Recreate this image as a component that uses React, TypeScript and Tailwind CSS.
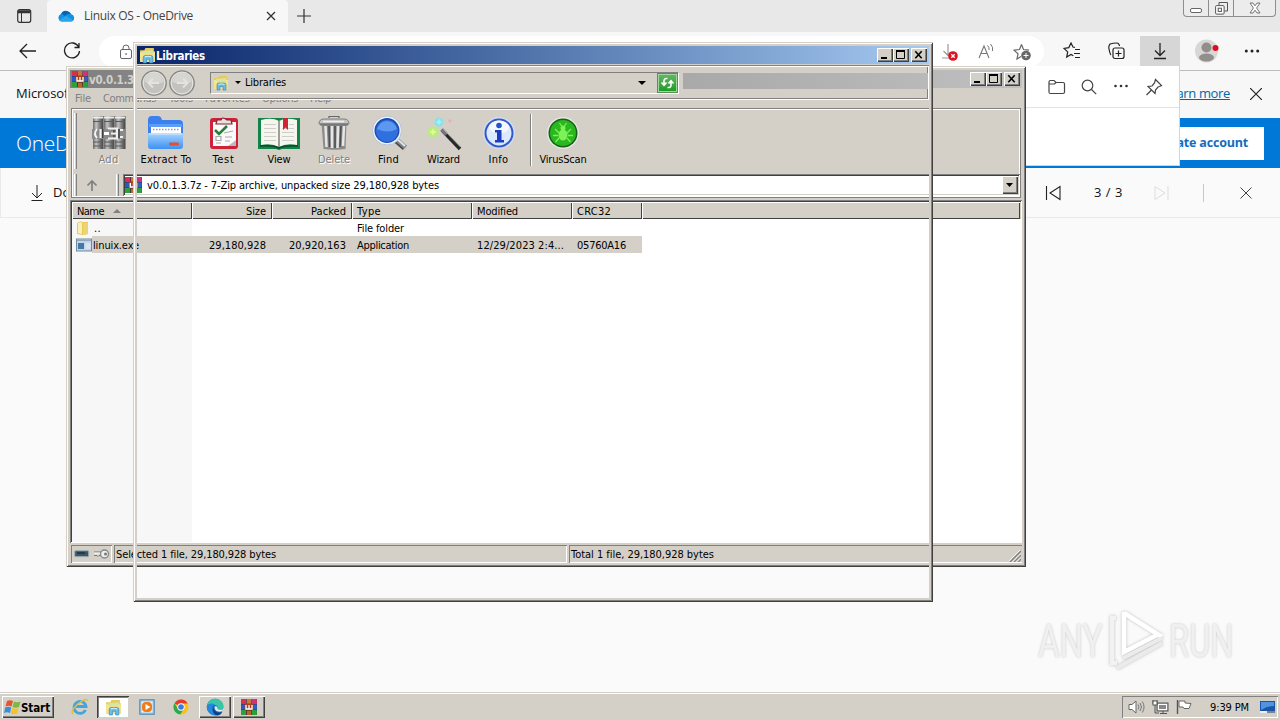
import { useLayoutEffect, useRef, useState } from 'react';
import type { ReactNode } from 'react';

const UI = "font-['DejaVu_Sans_Condensed','DejaVu_Sans',sans-serif] text-[11px] leading-[14px] [&_span]:pt-[2px]";
const OPEN = "font-['Open_Sans','Noto_Sans',sans-serif]";

/* Text whose tracking is adjusted so that it takes exactly `w` pixels. */
function T({ children, w, className = '' }: { children: string; w: number; className?: string }) {
  const ref = useRef<HTMLSpanElement>(null);
  const [ls, setLs] = useState(0);
  useLayoutEffect(() => {
    const el = ref.current;
    if (!el) return;
    el.style.letterSpacing = '0px';
    const natural = el.getBoundingClientRect().width;
    const next = (w - natural) / children.length;
    el.style.letterSpacing = `${next}px`;
    setLs(next);
  }, [w, children]);
  return (
    <span ref={ref} className={`inline-block shrink-0 whitespace-pre ${className}`} style={{ letterSpacing: ls }}>
      {children}
    </span>
  );
}

function Svg({ w, h, box, className = '', children }: { w: number; h: number; box?: string; className?: string; children: ReactNode }) {
  return (
    <svg width={w} height={h} viewBox={box ?? `0 0 ${w} ${h}`} className={`block shrink-0 ${className}`} fill="none">
      {children}
    </svg>
  );
}

const Books = ({ s = 16, w = s }: { s?: number; w?: number }) => (
  <svg width={w} height={s} viewBox="0 0 16 16" preserveAspectRatio="none" className="block shrink-0">
    <rect x="0" y="0" width="16" height="16" fill="#2a1c3c" />
    <rect x="0" y="0" width="5" height="5" fill="#d8304c" />
    <rect x="5.600" y="0" width="4.800" height="5" fill="#3b64cf" />
    <rect x="10.900" y="0" width="5" height="5" fill="#d4307c" />
    <rect x="0" y="5.300" width="5" height="5.200" fill="#2b57c8" />
    <rect x="10.900" y="5.300" width="5" height="5.200" fill="#2b62c8" />
    <rect x="0" y="10.800" width="5" height="5.200" fill="#2da03c" />
    <rect x="10.900" y="10.800" width="5" height="5.200" fill="#2da03c" />
    <rect x="5.600" y="0" width="4.800" height="4.500" fill="#c87832" />
    <rect x="5.600" y="11.500" width="4.800" height="4.500" fill="#b8642a" />
    <rect x="3.600" y="4.800" width="8.800" height="6.400" fill="#a8401c" />
    <path d="M5 6v4h6V6M8 6v4" stroke="#fff" strokeWidth="1.300" fill="none" />
  </svg>
);

const LibFolder = ({ s = 16 }: { s?: number }) => (
  <Svg w={s} h={s} box="0 0 16 16">
    <path d="M1 3h4l1-2h8v3h1v10H1z" fill="#e8c95c" />
    <path d="M1 5h14v9H1z" fill="#f5e694" />
    <path d="M3 4l10-1v3H3z" fill="#cfe8a8" />
    <path d="M2 13l2-7h9l2 7" fill="#f1dd80" />
    <path d="M4 15V10q0-2 2-2h5q2 0 2 2v5h-3v-3.500H7V15z" fill="#6bbde6" stroke="#2f86b8" strokeWidth=".6" />
    <path d="M5.500 9.500q3-1.500 6 0" stroke="#d3f2fc" />
  </Svg>
);

const EdgeLogo = () => (
  <Svg w={18} h={18}>
    <circle cx="9" cy="9" r="8.3" fill="#1a6fc4" />
    <path d="M1 8C2 2 7 0 11 1c4 1 7 4 6.500 8-.5 3-4 3-6 2.200 1-2-.5-4.200-3-4.200C5 7 2 6 1 8z" fill="#38c6a4" />
    <path d="M1 8c2-3 6-3 8-1.500C5 8 5 12 8 15c1.500 1.500 3 2 4 2C6 19 .3 14.500 1 8z" fill="#2387dc" />
    <path d="M8.500 8.500c-1.500 1.500-.8 5 3.500 6 2 .4 3.500-.4 4.500-1-1 2.500-3 4-5.500 4-4-1-5.500-6-2.500-9z" fill="#123f8a" />
    <path d="M9 8.200c1.800-.4 3 .9 2.500 2.800 1 1 3.500 1 6 .3-.5 1.800-3.500 3.400-7 1.700-1.700-1-2.400-3.200-1.500-4.800z" fill="#e4ece8" />
  </Svg>
);

const Chrome = () => (
  <Svg w={16} h={16}>
    <circle cx="8" cy="8" r="7.500" fill="#fbc116" />
    <path d="M8 8L1.500 4.200A7.500 7.500 0 0 1 14.700 4.500H8z" fill="#e33b2e" />
    <path d="M1.500 4.200A7.500 7.500 0 0 0 7.300 15.500l3.500-5.700L8 8 4.700 9.500z" fill="#2da94f" />
    <circle cx="8" cy="8" r="3.700" fill="#fff" />
    <circle cx="8" cy="8" r="2.800" fill="#3a7be8" />
  </Svg>
);

const BTN = 'shadow-[inset_1px_1px_#fff,inset_-1px_-1px_#404040,inset_-2px_-2px_#808080] bg-[#d4d0c8]';

function Caption() {
  return (
    <div className="flex h-[14px]">
      <div className={`h-[14px] w-4 ${BTN}`}>
        <Svg w={16} h={14}><path d="M4 10h6" stroke="#000" strokeWidth="2" /></Svg>
      </div>
      <div className={`h-[14px] w-4 ${BTN}`}>
        <Svg w={16} h={14}><path d="M3.500 3.500h8v7h-8z" stroke="#000" /><path d="M3 3h9" stroke="#000" strokeWidth="2" /></Svg>
      </div>
      <div className={`ml-[2px] h-[14px] w-4 ${BTN}`}>
        <Svg w={16} h={14}><path d="M4.300 3.300l6.400 6.900M10.700 3.300l-6.400 6.900" stroke="#000" strokeWidth="1.600" /></Svg>
      </div>
    </div>
  );
}

function Tool({ label, w, tw, off = false, children }: { label: string; w: string; tw: number; off?: boolean; children: ReactNode }) {
  return (
    <div className={`flex ${w} shrink-0 flex-col items-center`}>
      <div className="flex h-[37px] items-center justify-center">{children}</div>
      <div className={`${UI} ${off ? 'text-[#808080] [text-shadow:1px_1px_#fff]' : 'text-black'}`}>
        <T w={tw}>{label}</T>
      </div>
    </div>
  );
}

const Grip = ({ c }: { c: string }) => <div className={`w-[3px] shrink-0 border-l border-r border-l-white border-r-[#808080] bg-[#d4d0c8] ${c}`} />;

const AddIcon = () => (
  <Svg w={36} h={36}>
    <defs>
      <linearGradient id="spine">
        <stop stopColor="#6a6a6a" /><stop offset=".3" stopColor="#c4c4c4" /><stop offset=".65" stopColor="#7c7c7c" /><stop offset="1" stopColor="#3e3e3e" />
      </linearGradient>
    </defs>
    <rect x="2" y="1" width="10.500" height="33" fill="url(#spine)" />
    <rect x="13" y="1" width="10.500" height="33" fill="url(#spine)" />
    <rect x="24" y="1" width="10.500" height="33" fill="url(#spine)" />
    <path d="M2 2.500h32" stroke="#ececec" strokeWidth="2" strokeDasharray="10 1" />
    <path d="M2 6.500h32M2 27h32M2 31h32" stroke="#5c5c5c" strokeDasharray="10 1" />
    <rect x="1" y="14" width="34" height="10" fill="#8a8a8a" />
    <path d="M6 14q-4 5 0 9M9.500 14v9" stroke="#f4f4f4" strokeWidth="2" />
    <path d="M13 18.500h5" stroke="#fff" strokeWidth="3" />
    <path d="M17 13.500h9v10h-9M20 18.500h6M29 15h3M29 22h3" stroke="#f0f0f0" strokeWidth="2" />
    <path d="M11.700 14v9M23 15v2.500M23 20v2M28 14v9" stroke="#3a3a3a" strokeWidth="1.300" />
  </Svg>
);

const ExtractIcon = () => (
  <Svg w={38} h={36}>
    <defs>
      <linearGradient id="fb" x1="0" y1="0" x2="0" y2="1"><stop stopColor="#a7d5ff" /><stop offset="1" stopColor="#3d91f2" /></linearGradient>
    </defs>
    <path d="M1 5q0-4 4-4h6q3 0 4 4h17q4 0 4 4v11H1z" fill="#3c80ee" />
    <path d="M2 9h33v3H2z" fill="#5c9df7" />
    <path d="M4 12h30v9H4z" fill="#fff" />
    <path d="M6 14.500h26" stroke="#8f9bb0" strokeWidth="1.500" strokeDasharray="1.500 1.500" />
    <path d="M1 19q0-1 1-1h33q1 0 1 1v12q0 3-3 3H4q-3 0-3-3z" fill="url(#fb)" />
    <path d="M2 19h33" stroke="#d8eeff" />
    <rect x="22" y="27.500" width="10" height="3" rx=".8" fill="#e2502f" />
  </Svg>
);

const TestIcon = () => (
  <Svg w={30} h={34}>
    <rect x="1" y="2" width="28" height="31" rx="3" fill="#cf2139" />
    <path d="M4 6h23v24H4z" fill="#fafafa" />
    <path d="M27 24v6h-8z" fill="#b9bac2" />
    <path d="M8 4h4q1-4 6 0h4l1 4H7z" fill="#e9e1e1" stroke="#7b2a30" strokeWidth="1.200" />
    <path d="M6 14l4 4 8-8" stroke="#2b7d3c" strokeWidth="2.600" />
    <path d="M15 17l9-2M16 21h7M16 25h5M7 20.500h5v4H7zM7 27h5" stroke="#aaa" strokeWidth="1.200" />
  </Svg>
);

const ViewIcon = () => (
  <Svg w={42} h={34}>
    <path d="M0 2h42v31H24l-3 1-3-1H0z" fill="#128447" />
    <path d="M3 4q11-3 18 1 7-4 18-1v25q-11-2-18 2-7-4-18-2z" fill="#f6f6f0" />
    <path d="M6 8.500h12M6 12.500h12M6 16.500h12M6 20.500h12M6 24.500h12M24 16.500h12M24 20.500h12M24 24.500h12M24 12.500h12M31 8.500h5" stroke="#cfcfc8" />
    <path d="M21 5v26" stroke="#828278" strokeWidth="1.500" />
    <path d="M25 2h5v12l-2.500-2.500L25 14z" fill="#ce2436" />
    <path d="M2 30q12-1 19 2 7-3 19-2" stroke="#0b4a28" strokeWidth="1.500" />
  </Svg>
);

const TrashIcon = () => (
  <Svg w={32} h={36}>
    <path d="M3.500 8h25l-1 26q-11 1.500-22 0z" fill="#8b8b8b" />
    <path d="M7.500 11l1 21M14 11v22M20 11l-.5 22M26 11l-1 20" stroke="#e6e6e6" strokeWidth="2.500" />
    <path d="M11 11l.5 21M17 11v22M23 11l-1 21" stroke="#4e4e4e" strokeWidth="1.500" />
    <path d="M1 9q0-5 5-5h20q5 0 5 5z" fill="#c4c4c4" stroke="#7e7e7e" />
    <path d="M2 9.500h28" stroke="#777" strokeWidth="2" />
    <path d="M11 3V1.500h10V3" stroke="#666" strokeWidth="1.200" />
    <path d="M5 6.500h21" stroke="#eee" strokeWidth="1.500" />
  </Svg>
);

const FindIcon = () => (
  <Svg w={36} h={36}>
    <path d="M25 25l9 8" stroke="#7f878d" strokeWidth="6" />
    <path d="M25 23l9 8" stroke="#dfe5e8" strokeWidth="2" />
    <path d="M24 27l8 7" stroke="#444" strokeWidth="1.500" />
    <circle cx="16" cy="15.500" r="14.500" fill="#eef4fb" stroke="#b7c3d4" />
    <circle cx="16" cy="15.500" r="12.500" fill="#1e4cb0" />
    <circle cx="16" cy="16" r="11" fill="#2f6fe0" />
    <path d="M6 14q3-8 10-8t10 8q-9 5-20 0z" fill="#5c97f0" />
  </Svg>
);

const WizardIcon = () => (
  <Svg w={36} h={36}>
    <defs>
      <radialGradient id="wg"><stop stopColor="#e4ff8c" /><stop offset=".4" stopColor="#b4f468" /><stop offset="1" stopColor="#b4f468" stopOpacity="0" /></radialGradient>
      <radialGradient id="wb"><stop stopColor="#b9f8ff" /><stop offset=".5" stopColor="#77e4ee" /><stop offset="1" stopColor="#77e4ee" stopOpacity="0" /></radialGradient>
    </defs>
    <circle cx="7" cy="17" r="7" fill="url(#wg)" />
    <circle cx="13" cy="7" r="5.500" fill="url(#wb)" />
    <path d="M13 4v6M10 7h6" stroke="#9ff4ff" />
    <path d="M7 14v6M4 17h6" stroke="#eeffae" />
    <path d="M22 6h4M24 4v4" stroke="#f3a3ad" />
    <path d="M16 15l18 19" stroke="#272727" strokeWidth="3.500" />
    <path d="M15.500 14.500l5 5" stroke="#77727b" strokeWidth="3.500" />
    <path d="M17.500 14.500l17 17.500" stroke="#aaa" />
  </Svg>
);

const InfoIcon = () => (
  <Svg w={34} h={34}>
    <circle cx="17" cy="17" r="16" fill="#cfdcf6" />
    <circle cx="17" cy="17" r="13.500" fill="#dce9ff" stroke="#315ac8" strokeWidth="2" />
    <ellipse cx="17" cy="11" rx="10" ry="6.500" fill="#f5f9ff" />
    <circle cx="17" cy="9.500" r="2.800" fill="#2454c8" />
    <path d="M13 14h6.500v10H22v2.500h-9V24h2v-7.500h-2z" fill="#1a3ec0" />
  </Svg>
);

const VirusIcon = () => (
  <Svg w={34} h={34}>
    <circle cx="17" cy="17" r="16" fill="#e1e9df" />
    <circle cx="17" cy="17" r="14.500" fill="#1b5f1b" />
    <circle cx="17" cy="17" r="13" fill="#2ab71f" />
    <ellipse cx="17" cy="19" rx="4.500" ry="5.500" fill="#7df158" />
    <circle cx="17" cy="12" r="2.500" fill="#7df158" />
    <path d="M13 17l-4-4M21 17l4-4M12 19.500H7M22 19.500h5M13 22l-3.500 4M21 22l3.500 4M15.500 10l-2-3M18.500 10l2-3" stroke="#7df158" strokeWidth="1.300" />
  </Svg>
);

function Browser() {
  return (
    <div className={`flex h-[692px] flex-col bg-[#fafafa] ${OPEN}`}>
      <div className="flex h-8 bg-[#e8e8e8]">
        <div className="flex w-[47px] items-center justify-center">
          <Svg w={16} h={16}><rect x="1.700" y="1.700" width="13" height="12.600" rx="2" stroke="#333" strokeWidth="1.200" /><path d="M2 3h12M2 4.500h12" stroke="#333" strokeWidth="1.500" /><path d="M5.500 5v9" stroke="#333" /></Svg>
        </div>
        <div className="flex w-[241px] items-center rounded-t-[4px] bg-[#f7f7f7] pl-[10px]">
          <Svg w={18} h={12}><path d="M5 4a5 5 0 0 1 9 0 4 4 0 0 1 1 7.500H4A4 4 0 0 1 4 4z" fill="#1490df" /><path d="M4 4q2-4 6-3 3 1 4 3-4-1-6 2Q6 4 4 4z" fill="#0364b8" /><path d="M2 10l7-4 7 4-2 1.500H4z" fill="#28a8ea" /></Svg>
          <T w={109} className="ml-[9px] text-[12px] leading-4 text-[#444]">Linuix OS - OneDrive</T>
          <Svg w={10} h={10} className="ml-[73px]"><path d="M1 1l8 8M9 1l-8 8" stroke="#333" strokeWidth="1.300" /></Svg>
        </div>
        <Svg w={16} h={16} className="ml-[8px] mt-2"><path d="M8 1v14M1 8h14" stroke="#333" strokeWidth="1.200" /></Svg>
        <div className="ml-auto mr-[4px] flex h-[17px] w-[93px] rounded-b-[4px] border border-t-0 border-[#8e8e8e] bg-[#ececec]">
          <div className="flex w-[25px] items-end justify-center border-r border-[#8e8e8e] pb-[3px]"><Svg w={13} h={5}><rect x=".5" y=".5" width="11" height="4" rx="1.500" stroke="#666" fill="#fff" /></Svg></div>
          <div className="flex w-[25px] items-center justify-center border-r border-[#8e8e8e]"><Svg w={13} h={13}><path d="M4 3V.5h8.500V9H9.500" stroke="#555" /><rect x=".6" y="3.600" width="8.500" height="8.500" rx="1" stroke="#555" fill="#fff" /><rect x="3.200" y="6.200" width="3.200" height="3.200" stroke="#555" /></Svg></div>
          <div className="flex flex-1 items-center justify-center"><Svg w={12} h={12}><path d="M1 1h3l2 2.800L8 1h3L7.600 6 11 11H8L6 8.200 4 11H1l3.400-5z" stroke="#666" fill="#fff" strokeWidth=".9" /></Svg></div>
        </div>
      </div>
      <div className="flex h-[39px] border-b border-[#bdbdbd] bg-[#f7f7f7]">
        <Svg w={18} h={16} className="ml-[19px] mt-[11px]"><path d="M8 1L1 8l7 7M1 8h16" stroke="#222" strokeWidth="1.300" /></Svg>
        <Svg w={18} h={18} className="ml-[26px] mt-[10px]"><path d="M15.700 5A7.500 7.500 0 1 0 16.500 9M16 1v4.500h-4.500" stroke="#222" strokeWidth="1.300" /></Svg>
        <div className="ml-[18px] mt-[4px] flex h-[31px] w-[945px] items-center rounded-full bg-white pl-[20px]">
          <Svg w={14} h={16}><rect x="1.500" y="5.500" width="11" height="9" rx="1.500" stroke="#666" /><path d="M4 5.500V4q0-3 3-3t3 3v1.500" stroke="#666" /><rect x="6.300" y="9.300" width="1.500" height="1.500" fill="#666" /></Svg>
          <div className="ml-auto flex items-center pr-[12px]">
            <Svg w={18} h={18}><path d="M7 1v11M2.500 8L7 12.500 10 9M1 15h7" stroke="#999" strokeWidth="1.200" /><circle cx="12" cy="13" r="4.800" fill="#dc1420" /><path d="M10.300 11.300l3.400 3.400M13.700 11.300l-3.400 3.400" stroke="#fff" strokeWidth="1.300" /></Svg>
            <Svg w={17} h={17} className="ml-[19px]"><path d="M1 15L6 3l5 12M3 10.500h6" stroke="#777" strokeWidth="1.100" /><path d="M9.500 2.500q2 1.700 1.500 4.500M12.500 1q3 3 2 7" stroke="#777" /></Svg>
            <Svg w={19} h={18} className="ml-[18px]"><path d="M8.500 1.500l2 5 5.500.7M8.500 1.500l-2 5-5.500.7 4 3.500-1 5.300 4-2.500" stroke="#666" strokeWidth="1.200" /><circle cx="13" cy="12.500" r="4.800" fill="#666" /><path d="M10.500 12.500h5M13 10v5" stroke="#fff" /></Svg>
          </div>
        </div>
        <Svg w={18} h={18} className="ml-[19px] mt-[10px]"><path d="M17 7.500h-5M17 11.500h-6M17 15.500h-5M12 5.500l-2-.5-2-4-2.200 4.600L1 6.400l3.700 3.500-1 5.200L8 12.500l2.300 1.300" stroke="#222" strokeWidth="1.200" /></Svg>
        <Svg w={18} h={18} className="ml-[26px] mt-[10px]"><rect x="6" y="6" width="11" height="10.500" rx="2" stroke="#222" strokeWidth="1.200" /><path d="M11.500 8.500v6M8.500 11.500h6M4 13Q3 12 2 7q-.5-2 0-3l1-2q3-1 7-1 2 0 2.500 3" stroke="#222" strokeWidth="1.200" /></Svg>
        <div className="ml-[15px] mt-[4px] flex h-[34px] w-10 items-start justify-center bg-[#d6d6d6] pt-[6px]"><Svg w={16} h={18}><path d="M8 1v12M3 8.500l5 5 5-5M2 16.500h12" stroke="#222" strokeWidth="1.300" /></Svg></div>
        <Svg w={24} h={24} className="ml-[15px] mt-[7px]"><circle cx="11.500" cy="12" r="11.500" fill="#d9d7d5" /><circle cx="11.500" cy="8.500" r="5" fill="#918e8b" /><ellipse cx="11.500" cy="18.500" rx="7.500" ry="4" fill="#918e8b" /><circle cx="20.500" cy="9" r="3" fill="#e00b1c" /></Svg>
        <Svg w={16} h={4} className="ml-[25px] mt-[17px]"><circle cx="2.300" cy="2" r="1.500" fill="#222" /><circle cx="8" cy="2" r="1.500" fill="#222" /><circle cx="13.700" cy="2" r="1.500" fill="#222" /></Svg>
      </div>
      <div className="flex h-[47px] items-center bg-[#f7f7f7] pb-[2px] pl-4 pr-[18px]">
        <T w={57} className="text-[13px] text-[#111]">Microsoft</T>
        <T w={67} className="ml-auto text-[13px] text-[#0067a8] underline">Learn more</T>
        <Svg w={12} h={12} className="ml-[20px]"><path d="M0 0l12 12M12 0L0 12" stroke="#222" strokeWidth="1.200" /></Svg>
      </div>
      <div className="flex h-[50px] items-center bg-[#0078d7] pl-4 pr-4">
        <T w={86} className="mt-[2px] text-[21px] font-light text-white">OneDrive</T>
        <div className="ml-auto flex h-[33px] items-center bg-white px-4 pt-px"><T w={92} className="text-[12.5px] font-bold text-[#106ebe]">Create account</T></div>
      </div>
      <div className="flex h-[50px] items-center border-b border-l border-[#eaeaea] bg-[#fafafa] pl-[29px] pr-[28px]">
        <Svg w={14} h={18} className="mt-[1px]"><path d="M7 1v13M2 9l5 5 5-5M1.500 16.500h11" stroke="#222" /></Svg>
        <T w={62} className="ml-[9px] text-[13px] text-[#111]">Download</T>
        <div className="ml-auto flex items-center">
          <Svg w={16} h={16}><path d="M1.500 1v14M15 1.500v13L5 8z" stroke="#222" strokeWidth="1.100" /></Svg>
          <T w={29} className="ml-[33px] text-[13px] text-[#111]">3 / 3</T>
          <Svg w={16} h={16} className="ml-[31px]"><path d="M14 1v14M1 1.500v13L11 8z" stroke="#ddd" /></Svg>
          <div className="ml-[33px] h-[18px] w-px bg-[#c8c8c8]" />
          <Svg w={12} h={12} className="ml-[36px]"><path d="M.5.500l11 11M11.500.500l-11 11" stroke="#444" /></Svg>
        </div>
      </div>
    </div>
  );
}

function Downloads() {
  return (
    <div className="absolute left-[1000px] top-[66px] h-[100px] w-[180px] border-b border-r border-[#d5d5d5] bg-white">
      <div className="flex h-[42px] items-center border-b border-[#e3e3e3] pl-12">
        <Svg w={18} h={16}><path d="M1 3q0-1.500 1.500-1.500H6L8 3.500h7Q16.500 3.500 16.500 5v8q0 1.500-1.500 1.500H2.500Q1 14.500 1 13zM1 5h5.500L8 3.500" stroke="#444" strokeWidth="1.200" /></Svg>
        <Svg w={16} h={16} className="ml-[15px]"><circle cx="6.500" cy="6.500" r="5.300" stroke="#444" strokeWidth="1.200" /><path d="M10.500 10.500l4.700 4.700" stroke="#444" strokeWidth="1.200" /></Svg>
        <Svg w={16} h={4} className="-mt-[2px] ml-[16px]"><circle cx="2.500" cy="2" r="1.300" fill="#333" /><circle cx="8" cy="2" r="1.300" fill="#333" /><circle cx="13.500" cy="2" r="1.300" fill="#333" /></Svg>
        <Svg w={18} h={18} className="ml-[16px]"><path d="M10.500 1.500l6 6-2 1-1.500.500-2.500 3-.5 3.500L3 8.500 7 8l2.500-3zM6.500 12L1.500 17" stroke="#444" strokeWidth="1.200" /></Svg>
      </div>
    </div>
  );
}

const HC = 'flex h-[17px] shrink-0 items-center bg-[#d4d0c8] shadow-[inset_1px_1px_#fff,inset_-1px_-1px_#404040]';

function Archive() {
  return (
    <div className={`absolute left-[66px] top-[66px] flex h-[501px] w-[960px] flex-col overflow-hidden bg-[#d4d0c8] p-[4px] shadow-[inset_1px_1px_#d4d0c8,inset_-1px_-1px_#404040,inset_2px_2px_#fff,inset_-2px_-2px_#808080] ${UI}`}>
      <div className="flex h-[18px] shrink-0 items-center bg-linear-to-r from-[#808080] to-[#c0c0c0] pl-[2px] pr-[2px]">
        <Books s={16} />
        <T w={45} className="-mt-px ml-[1px] text-[11.5px] font-bold text-[#d4d0c8]">v0.0.1.3</T>
        <div className="ml-auto"><Caption /></div>
      </div>
      <div className="flex h-[20px] shrink-0 items-center pb-[1px] pl-[5px] text-[#808080]">
        <T w={16}>File</T>
        <T w={53} className="ml-[12px]">Commands</T>
        <T w={24} className="ml-[13px]">Tools</T>
        <T w={45} className="ml-[12px]">Favorites</T>
        <T w={36} className="ml-[12px]">Options</T>
        <T w={21} className="ml-[12px]">Help</T>
      </div>
      <div className="mx-px flex h-[90px] shrink-0 flex-col border border-[#808080] shadow-[inset_1px_1px_#fff,inset_-1px_-1px_#fff]">
        <div className="flex h-[62px] pt-[4px]">
          <Grip c="ml-[2px] h-[56px]" />
          <div className="flex pl-[4px] pt-[1px]">
            <Tool label="Add" w="w-[55px]" tw={20} off><AddIcon /></Tool>
            <Tool label="Extract To" w="w-[60px]" tw={51}><ExtractIcon /></Tool>
            <Tool label="Test" w="w-[55px]" tw={22}><TestIcon /></Tool>
            <Tool label="View" w="w-[56px]" tw={23}><ViewIcon /></Tool>
            <Tool label="Delete" w="w-[54px]" tw={32} off><TrashIcon /></Tool>
            <Tool label="Find" w="w-[55px]" tw={21}><FindIcon /></Tool>
            <Tool label="Wizard" w="w-[55px]" tw={33}><WizardIcon /></Tool>
            <Tool label="Info" w="w-[55px]" tw={20}><InfoIcon /></Tool>
            <div className="ml-[4px] h-[52px] w-[2px] border-l border-r border-l-[#808080] border-r-white" />
            <Tool label="VirusScan" w="w-[62px]" tw={47}><VirusIcon /></Tool>
          </div>
        </div>
        <div className="flex h-[26px] items-center pt-px">
          <Grip c="ml-[2px] h-[22px]" />
          <Svg w={14} h={14} className="ml-[8px]"><path d="M7 13V3M2.500 7.500L7 3l4.500 4.500" stroke="#808080" strokeWidth="1.700" /></Svg>
          <Grip c="ml-[17px] h-[22px]" />
          <div className="ml-[4px] flex h-[22px] w-[897px] items-center bg-white pl-[2px] pr-[2px] shadow-[inset_1px_1px_#808080,inset_-1px_-1px_#fff,inset_2px_2px_#404040,inset_-2px_-2px_#d4d0c8]">
            <Books s={16} w={17} />
            <T w={292} className="ml-[5px] text-black">v0.0.1.3.7z - 7-Zip archive, unpacked size 29,180,928 bytes</T>
            <div className={`ml-auto flex h-[18px] w-4 items-center justify-center ${BTN}`}><Svg w={8} h={4}><path d="M0 0h7L3.500 4z" fill="#000" /></Svg></div>
          </div>
        </div>
      </div>
      <div className="mt-[2px] flex h-[343px] shrink-0 flex-col bg-white pb-[1px] pl-[2px] pr-[1px] pt-[2px] shadow-[inset_1px_1px_#808080,inset_-1px_-1px_#fff,inset_2px_2px_#404040,inset_-2px_-2px_#d4d0c8]">
        <div className="flex shrink-0 text-black">
          <div className={`${HC} w-[120px] pl-[5px]`}><T w={27}>Name</T><Svg w={8} h={4} className="ml-[9px]"><path d="M0 4l4-4 4 4z" fill="#808080" /></Svg></div>
          <div className={`${HC} w-[80px] justify-end pr-[6px]`}><T w={20}>Size</T></div>
          <div className={`${HC} w-[80px] justify-end pr-[6px]`}><T w={35}>Packed</T></div>
          <div className={`${HC} w-[120px] pl-[5px]`}><T w={24}>Type</T></div>
          <div className={`${HC} w-[100px] pl-[5px]`}><T w={41}>Modified</T></div>
          <div className={`${HC} w-[70px] pl-[5px]`}><T w={34}>CRC32</T></div>
          <div className={`${HC} w-[378px]`} />
        </div>
        <div className="flex-1 bg-linear-to-r from-[#f7f7f7] from-[120px] to-white to-[120px] text-black">
          <div className="flex h-[17px] items-center">
            <Svg w={16} h={16} className="ml-[3px]"><path d="M2 3l4-2 1 1h6v12l-5 1-6-1z" fill="#e9c85c" /><path d="M8 3h5v11l-5 1z" fill="#ecd470" /><path d="M3 3l4-1v12l-4-1z" fill="#faf0b4" /></Svg>
            <T w={7} className="ml-[3px]">..</T>
            <T w={47} className="ml-[256px]">File folder</T>
          </div>
          <div className="flex h-[17px] items-center">
            <Svg w={16} h={14} className="ml-[4px]"><rect x=".5" y="1" width="15" height="12" fill="#c4d6e6" stroke="#71899f" /><path d="M1 2.500h14" stroke="#8fa9c4" /><rect x="2" y="5" width="6" height="6" fill="#4678a4" /><path d="M9.500 6h5M9.500 8h5M9.500 10h5" stroke="#eef4fa" /></Svg>
            <div className="flex h-[17px] w-[550px] items-center bg-[#d4d0c8]">
              <T w={46} className="ml-px">linuix.exe</T>
              <T w={57} className="ml-[70px]">29,180,928</T>
              <T w={57} className="ml-[23px]">20,920,163</T>
              <T w={52} className="ml-[11px]">Application</T>
              <T w={87} className="ml-[68px]">12/29/2023 2:4...</T>
              <T w={49} className="ml-[13px]">05760A16</T>
            </div>
          </div>
        </div>
      </div>
      <div className="mt-[2px] flex h-[18px] shrink-0 gap-[2px] pl-[1px] text-black">
        <div className="flex w-[41px] items-center justify-center gap-[3px] shadow-[inset_1px_1px_#808080,inset_-1px_-1px_#fff]">
          <Svg w={16} h={8}><rect x=".7" y=".7" width="14" height="6" rx="1" fill="#405560" stroke="#9db1bb" /><path d="M3 3h8" stroke="#10202a" /></Svg>
          <Svg w={17} h={12}><path d="M1 4h9M1 7.500h3l1 1 1-1h3" stroke="#777" /><path d="M1 5.500h8" stroke="#eee" strokeWidth="2" /><circle cx="11.500" cy="6" r="4" stroke="#888" strokeWidth="1.400" fill="#eee" /><circle cx="12.500" cy="6" r="1.500" fill="#777" /></Svg>
        </div>
        <div className="flex w-[453px] items-center pl-[2px] shadow-[inset_1px_1px_#808080,inset_-1px_-1px_#fff]"><T w={160}>Selected 1 file, 29,180,928 bytes</T></div>
        <div className="flex flex-1 items-center pl-[2px] shadow-[inset_1px_1px_#808080,inset_0_-1px_#fff]">
          <T w={143}>Total 1 file, 29,180,928 bytes</T>
          <Svg w={12} h={12} className="ml-auto mr-px mt-[4px]"><path d="M1 12L12 1M5 12l7-7M9 12l3-3" stroke="#808080" strokeWidth="1.400" /><path d="M0 11L11 0M4 11.500l8-8M8 11.500l4-4" stroke="#fff" strokeWidth=".8" /></Svg>
        </div>
      </div>
    </div>
  );
}

const NavBall = ({ flip }: { flip?: boolean }) => (
  <Svg w={26} h={26} className={flip ? '-scale-x-100' : ''}>
    <circle cx="13" cy="13" r="12.200" fill="#c9c8c4" stroke="#858582" strokeWidth="1.300" />
    <circle cx="13" cy="13" r="10.800" fill="#c3c2be" stroke="#e6e6e3" />
    <path d="M3.500 12a9.500 9.500 0 0 1 19 0q-9 4-19 0z" fill="#d6d5d1" />
    <path d="M12 8.500L7.500 13l4.500 4.500M8 13h10" stroke="#e4e3e0" strokeWidth="2" />
  </Svg>
);

function Libraries() {
  return (
    <div className={`absolute left-[133px] top-[42px] flex h-[560px] w-[800px] flex-col p-[4px] shadow-[inset_1px_1px_#d4d0c8,inset_-1px_-1px_#404040,inset_2px_2px_#fff,inset_-2px_-2px_#808080,inset_0_0_0_4px_#d4d0c8] ${UI}`}>
      <div className="flex h-[18px] shrink-0 items-center bg-linear-to-r from-[#0a246a] to-[#a6caf0] pl-[2px] pr-[2px]">
        <LibFolder s={17} />
        <T w={49} className="-mt-px text-[11.5px] font-bold text-white">Libraries</T>
        <div className="ml-auto"><Caption /></div>
      </div>
      <div className="flex h-[36px] shrink-0 items-center bg-[#d4d0c8] pt-[1px]">
        <div className="flex h-[35px] flex-1 items-center pl-[4px] pr-[1px] shadow-[inset_0_1px_#808080,inset_-1px_-1px_#fff,inset_0_2px_#fff,inset_-2px_-2px_#808080]">
          <NavBall />
          <div className="ml-[2px]"><NavBall flip /></div>
          <div className="ml-[15px] flex h-[22px] w-[469px] items-center border border-b-white border-l-[#808080] border-r-white border-t-[#808080] pl-[2px] text-black">
            <LibFolder />
            <Svg w={6} h={3} className="ml-[6px]"><path d="M0 0h6L3 3z" fill="#000" /></Svg>
            <T w={41} className="-mt-px ml-[4px]">Libraries</T>
            <Svg w={8} h={4} className="ml-auto mr-[11px]"><path d="M0 0h8L4 4z" fill="#000" /></Svg>
            <div className="flex h-[20px] w-[21px] items-center justify-center border border-[#5b8d5b] bg-linear-to-b from-[#65b565] to-[#159a20] shadow-[inset_0_0_0_1px_#9ed79e]">
              <Svg w={15} h={14}><path d="M7.500 2.500Q4 2 4 5v4M1.500 6.500L4 9.300l2.500-2.800M7.500 11.500q3.500.5 3.500-2.500V5M8.500 7.500L11 4.700l2.500 2.800" stroke="#fff" strokeWidth="1.600" /></Svg>
            </div>
          </div>
          <div className="-mt-[3px] ml-[4px] h-4 flex-1 bg-linear-to-r from-[#a9a9a9] to-[#b9b9b9]" />
        </div>
      </div>
    </div>
  );
}

function Watermark() {
  return (
    <div className="absolute left-[1038px] top-[608px] flex h-[64px] w-[200px] items-center font-['Roboto',sans-serif] text-[46px] font-normal leading-none text-[#f0f0f0] [text-shadow:0_0_3px_#c4c4c4]">
      <div className="w-[65px] shrink-0 pt-[2px]"><span className="inline-block origin-left scale-x-[0.72]">ANY</span></div>
      <Svg w={66} h={64} className="drop-shadow-[0_0_1.5px_#bdbdbd]">
        <path d="M21 5L59 29M21 4v40L54 27" stroke="#fff" strokeWidth="4.500" />
        <path d="M13 10H9v45h5" stroke="#f2f2f2" strokeWidth="4.500" />
        <path d="M20 50L59 30M14 60l45-25" stroke="#ebebeb" strokeWidth="4" />
      </Svg>
      <div className="shrink-0 pt-[2px]"><span className="inline-block origin-left scale-x-[0.71]">RUN</span></div>
    </div>
  );
}

function Taskbar() {
  return (
    <div className={`flex h-[28px] items-center border-t border-[#d4d0c8] bg-[#d4d0c8] pl-[2px] pr-[2px] pt-[1px] shadow-[inset_0_1px_#fff] ${UI} text-black`}>
      <div className={`flex h-[22px] w-[52px] items-center pl-[2px] ${BTN}`}>
        <Svg w={17} h={16}><path d="M3 2q3-1.500 6 0L7.500 7.500q-3-1.500-6 0z" fill="#e8552a" /><path d="M10 2.500q3 1.500 6.500 0L15 8q-3 1.500-6.500 0z" fill="#7ab943" /><path d="M1.200 8.500q3-1.500 6 0L6 14q-3-1.500-6 0z" fill="#3b8edb" /><path d="M8.200 9q3 1.500 6.500 0l-1.500 5.500q-3 1.500-6.500 0z" fill="#f6c32c" /></Svg>
        <T w={29} className="-mt-px text-[11.5px] font-bold">Start</T>
      </div>
      <Svg w={18} h={18} className="ml-[17px]"><path d="M14.500 12A6 6 0 1 1 15 8.500H5" stroke="#42a5de" strokeWidth="2.800" /><path d="M2 16Q-1 13 7 6t10-3" stroke="#e4bd3c" strokeWidth="1.500" /></Svg>
      <div className="ml-[8px] flex h-[22px] w-8 items-center justify-center bg-white shadow-[inset_1px_1px_#404040,inset_-1px_-1px_#d4d0c8,inset_2px_2px_#808080]"><LibFolder s={17} /></div>
      <Svg w={16} h={16} className="ml-[10px]"><rect x=".8" y=".8" width="14.400" height="14.400" fill="#9bcbea" stroke="#4b82b0" /><rect x="2.500" y="2.500" width="11" height="11" fill="#e9f3fa" /><rect x="3" y="3" width="10" height="10" rx="4" fill="#f17c15" /><path d="M6.500 5l5 3-5 3z" fill="#fff" /></Svg>
      <div className="ml-[18px]"><Chrome /></div>
      <div className={`ml-[10px] flex h-[22px] w-8 items-center justify-center ${BTN}`}><EdgeLogo /></div>
      <div className={`ml-[2px] flex h-[22px] w-8 items-center justify-center ${BTN}`}><Books s={16} /></div>
      <div className="ml-auto flex h-[22px] w-[156px] items-center pl-[6px] shadow-[inset_1px_1px_#808080,inset_-1px_-1px_#fff]">
        <Svg w={17} h={16}><path d="M1 5.500h3L8 2v12L4 10.500H1z" fill="#fff" stroke="#666" /><path d="M10 5.500q2 2.500 0 5M12 4q3 4 0 8M14.300 2.500q3.500 5.500 0 11" stroke="#777" /></Svg>
        <Svg w={17} h={16} className="ml-[7px]"><rect x="5" y="4" width="11" height="8" fill="#bbb" stroke="#555" /><rect x="6.500" y="5.500" width="8" height="5" fill="#888" stroke="#fff" /><path d="M8 14.500h7M11 12v2" stroke="#555" /><path d="M1 1v4h4V1M3 5v9h4" stroke="#555" /><rect x="1" y="2" width="4" height="4" fill="#fff" stroke="#555" /></Svg>
        <Svg w={17} h={16} className="ml-[7px]"><path d="M1.500 1v14" stroke="#555" strokeWidth="1.400" /><path d="M3 2h6v2l6 .5-2 5H8L7 8H3z" fill="#fff" stroke="#666" /></Svg>
        <T w={39} className="ml-[17px]">9:39 PM</T>
        <Svg w={16} h={14} className="ml-[11px]"><path d="M0 1h15v10H0z" fill="#1c55a5" /><path d="M1 2h13v4Q7 6 1 10z" fill="#4f94e0" /><path d="M0 11h7v2H0z" fill="#e8eef4" /><path d="M7 12h8" stroke="#183868" /></Svg>
      </div>
    </div>
  );
}

export default function App() {
  return (
    <div className="relative h-[720px] w-[1280px] overflow-hidden bg-[#fafafa]">
      <Browser />
      <Taskbar />
      <Downloads />
      <Archive />
      <Libraries />
      <Watermark />
    </div>
  );
}
